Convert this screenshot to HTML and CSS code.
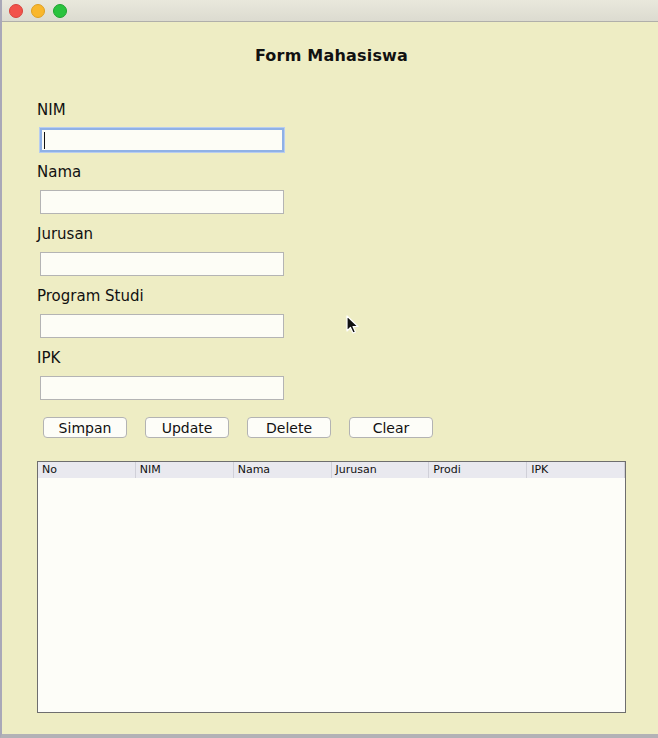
FILE: index.html
```html
<!DOCTYPE html>
<html>
<head>
<meta charset="utf-8">
<link rel="stylesheet" href="styles.css">
</head>
<body>
<div class="window">
  <div class="titlebar">
    <span class="light red"></span>
    <span class="light yellow"></span>
    <span class="light green"></span>
  </div>
  <div class="content">
    <h1 class="title">Form Mahasiswa</h1>
    <div class="form">
      <div class="group">
        <label class="label">NIM</label>
        <div class="field focused"><span class="caret"></span></div>
      </div>
      <div class="group">
        <label class="label">Nama</label>
        <div class="field"></div>
      </div>
      <div class="group">
        <label class="label">Jurusan</label>
        <div class="field"></div>
      </div>
      <div class="group">
        <label class="label">Program Studi</label>
        <div class="field"></div>
      </div>
      <div class="group">
        <label class="label">IPK</label>
        <div class="field"></div>
      </div>
    </div>
    <div class="buttons">
      <button class="btn">Simpan</button>
      <button class="btn">Update</button>
      <button class="btn">Delete</button>
      <button class="btn">Clear</button>
    </div>
    <div class="table">
      <div class="thead">
        <div class="th">No</div>
        <div class="th">NIM</div>
        <div class="th">Nama</div>
        <div class="th">Jurusan</div>
        <div class="th">Prodi</div>
        <div class="th">IPK</div>
      </div>
      <div class="tbody"></div>
    </div>
  </div>
  <svg class="pointer" width="14" height="20" viewBox="0 0 14 20">
    <path d="M1 1 L1 16 L4.5 12.5 L7 18 L9.5 17 L7 11.5 L12 11.5 Z" fill="#111" stroke="#fff" stroke-width="1.2" stroke-linejoin="round"/>
  </svg>
</div>
</body>
</html>
```

FILE: styles.css
```css
html, body {
  margin: 0;
  padding: 0;
}
body {
  width: 658px;
  height: 738px;
  overflow: hidden;
  background: #ecebc2;
  font-family: "DejaVu Sans", "Liberation Sans", sans-serif;
  color: #111;
}
.window {
  position: relative;
  width: 658px;
  height: 738px;
  box-sizing: border-box;
  border-left: 2px solid #a9a8b8;
  border-bottom: 4px solid #b3b2b6;
  background: #eeedc4;
}
.titlebar {
  height: 21px;
  display: flex;
  align-items: center;
  gap: 8px;
  padding-left: 7px;
  background: linear-gradient(#e9e8dc, #dcdbd0);
  border-bottom: 1px solid #b0afaa;
}
.light {
  width: 12px;
  height: 12px;
  border-radius: 50%;
  display: block;
}
.red { background: #f2524a; border: 0.5px solid #d8433c; }
.yellow { background: #f9b72c; border: 0.5px solid #dfa021; }
.green { background: #2ac33e; border: 0.5px solid #1fa32f; }
.content {
  padding: 0 0 0 35px;
}
.title {
  margin: 24px 0 0 0;
  text-align: center;
  font-size: 16px;
  font-weight: bold;
  line-height: 20px;
  padding-right: 32px;
  letter-spacing: 0.2px;
}
.form {
  margin-top: 34px;
  display: flex;
  flex-direction: column;
}
.group {
  display: flex;
  flex-direction: column;
  height: 62px;
}
.label {
  font-size: 15px;
  line-height: 20px;
  height: 28px;
}
.field {
  position: relative;
  margin-left: 3px;
  width: 244px;
  height: 24px;
  box-sizing: border-box;
  background: #fdfdf6;
  border: 1px solid #b4b4b4;
}
.field.focused {
  border: 2px solid #8fb1e6;
  box-shadow: 0 0 0 1px #b7cdf0;
}
.caret {
  position: absolute;
  left: 2px;
  top: 2px;
  width: 1px;
  height: 17px;
  background: #111;
}
.buttons {
  margin-top: 7px;
  margin-left: 6px;
  display: flex;
  gap: 18px;
}
.btn {
  width: 84px;
  height: 21px;
  padding: 0;
  box-sizing: border-box;
  background: #fdfdf8;
  border: 1px solid #b3b3b3;
  border-radius: 4px;
  font-family: "DejaVu Sans", "Liberation Sans", sans-serif;
  font-size: 14px;
  line-height: 18px;
  color: #111;
}
.table {
  margin-top: 23px;
  width: 589px;
  height: 252px;
  box-sizing: border-box;
  border: 1px solid #6e6e6e;
  background: #fdfdf8;
  display: flex;
  flex-direction: column;
}
.thead {
  display: grid;
  grid-template-columns: repeat(6, 1fr);
  height: 16px;
  background: #e9e9ef;
}
.th {
  font-size: 11px;
  line-height: 16px;
  padding-left: 4px;
  border-right: 1px solid #d0d0d8;
}
.tbody {
  flex: 1;
}
.pointer {
  position: absolute;
  left: 344px;
  top: 315px;
}
```
